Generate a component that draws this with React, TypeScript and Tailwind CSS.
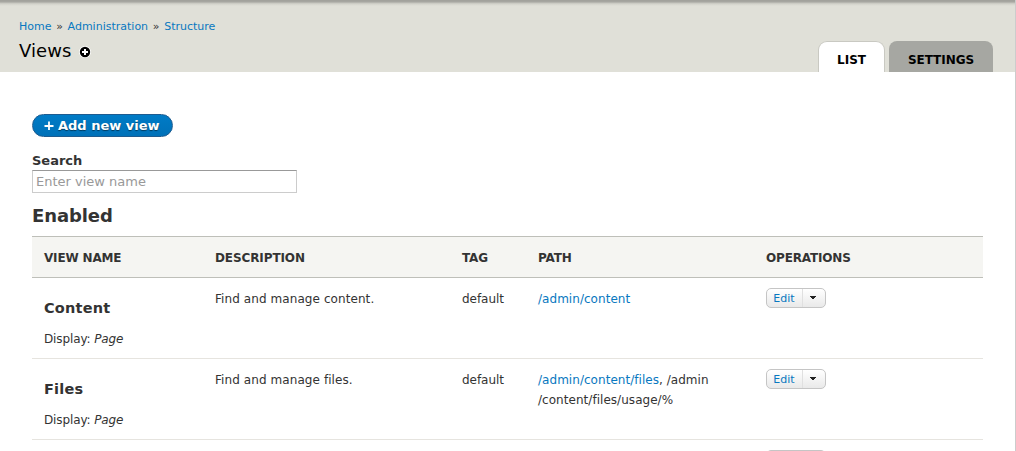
import React from "react";

const cols = "grid grid-cols-[171px_247px_76px_228px_229px]";

function DropButton() {
  return (
    <div className="flex h-5 w-[60px] rounded-[5px] border border-[#c5c5c5] bg-linear-to-b from-white to-[#e9e9e9] text-[11px] leading-[18px]">
      <button className="w-[35px] pr-[1px] pt-px text-center text-[#0878c0]">Edit</button>
      <button aria-label="More operations" className="flex flex-1 justify-center border-l border-[#e0e0e0] pt-[7px]">
        <svg width="6" height="3" viewBox="0 0 6 3" className="mr-[2px]" shapeRendering="crispEdges">
          <path d="M0 0H6V1H5V2H4V3H2V2H1V1H0Z" fill="#222" />
        </svg>
      </button>
    </div>
  );
}

function Row({ name, description, path }: { name: string; description: string; path: React.ReactNode }) {
  return (
    <div className={`${cols} h-[81px] border-b border-[#e6e4df] pt-[10px] text-[12px] leading-5`}>
      <div className="pl-3">
        <h3 className="mt-[10px] text-[14.5px] font-bold leading-5 tracking-[0.2px]">{name}</h3>
        <div className="mt-[11px] tracking-[-0.12px]">
          Display: <em>Page</em>
        </div>
      </div>
      <div className="pl-3 pt-px tracking-[0.08px]">{description}</div>
      <div className="pl-3 pt-px tracking-[-0.05px]">default</div>
      <div className="pl-3 pt-px tracking-[0.04px]">{path}</div>
      <div className="pl-3">
        <DropButton />
      </div>
    </div>
  );
}

export default function App() {
  return (
    <div className="h-[451px] overflow-hidden border-r border-[#ccc] bg-white font-['DejaVu_Sans',sans-serif] text-[#333]">
      <header className="flex h-[72px] justify-between bg-[#e0e0d8] bg-[linear-gradient(to_bottom,#a0a09a_0px,#a8a8a2_2px,#c4c4bd_3px,#d3d3cb_4px,#e0e0d8_6px)] pl-[19px] pr-[22px]">
        <div>
          <nav className="mt-[19px] flex gap-[4.7px] text-[11px] leading-4">
            <a className="text-[#0878c0]">Home</a>
            <span>»</span>
            <a className="text-[#0878c0]">Administration</a>
            <span>»</span>
            <a className="text-[#0878c0]">Structure</a>
          </nav>
          <div className="mt-[4px] flex items-center text-black">
            <h1 className="text-[18px] leading-6 tracking-[0.1px]">Views</h1>
            <svg width="12" height="12" viewBox="0 0 12 12" className="ml-[7.5px] mt-[2px]">
              <circle cx="6" cy="6" r="6" fill="#fff" />
              <circle cx="6" cy="6" r="5.2" fill="#000" />
              <path d="M6 3V9M3 6H9" stroke="#fff" strokeWidth="2" />
            </svg>
          </div>
        </div>
        <div className="flex items-end gap-1 text-[12px] font-bold text-black">
          <a className="h-[31px] w-[67px] rounded-t-[9px] border border-b-0 border-[#c9c9c2] bg-white pt-[10px] text-center leading-4">LIST</a>
          <a className="h-[31px] w-[104px] rounded-t-[8px] bg-[#a6a7a2] pt-[11px] text-center leading-4 tracking-[-0.05px]">SETTINGS</a>
        </div>
      </header>
      <main className="pl-8 pr-8 pt-[42px]">
        <button className="flex h-[23px] w-[141px] items-center rounded-full border border-[#1e5c90] bg-linear-to-b from-[#007bc6] to-[#0071b8] pl-[11px] text-[13px] font-bold text-white [text-shadow:0_1px_1px_rgba(0,0,0,0.5)]">
          <svg width="10" height="10" viewBox="0 0 10 10" className="mr-1">
            <path d="M5 0.5V9M0.5 5H9.5" stroke="#fff" strokeWidth="1.8" />
          </svg>
          Add new view
        </button>
        <label className="mt-[15px] block text-[13px] font-bold leading-[18px]">Search</label>
        <input
          placeholder="Enter view name"
          className="block h-[23px] w-[265px] border border-[#ccc] border-t-[#999] px-[3px] text-[13px] placeholder:text-[#999]"
        />
        <h2 className="mt-[11px] text-[18px] font-bold leading-6 tracking-[-0.1px]">Enabled</h2>
        <section className="mt-[8px] w-[951px]">
          <div className={`${cols} h-[42px] border-y border-[#bebfb9] bg-[#f5f5f2] text-[12px] font-bold leading-[42px] tracking-[-0.17px]`}>
            <div className="pl-3">VIEW NAME</div>
            <div className="pl-3 tracking-[-0.1px]">DESCRIPTION</div>
            <div className="pl-3">TAG</div>
            <div className="pl-3">PATH</div>
            <div className="pl-3">OPERATIONS</div>
          </div>
          <Row name="Content" description="Find and manage content." path={<a className="text-[#0878c0]">/admin/content</a>} />
          <Row
            name="Files"
            description="Find and manage files."
            path={
              <>
                <a className="text-[#0878c0]">/admin/content/files</a>, /admin
                <br />
                /content/files/usage/%
              </>
            }
          />
          <div className="pl-[734px] pt-[10px]">
            <div className="h-5 w-[60px] rounded-[5px] border border-[#c5c5c5]" />
          </div>
        </section>
      </main>
    </div>
  );
}
